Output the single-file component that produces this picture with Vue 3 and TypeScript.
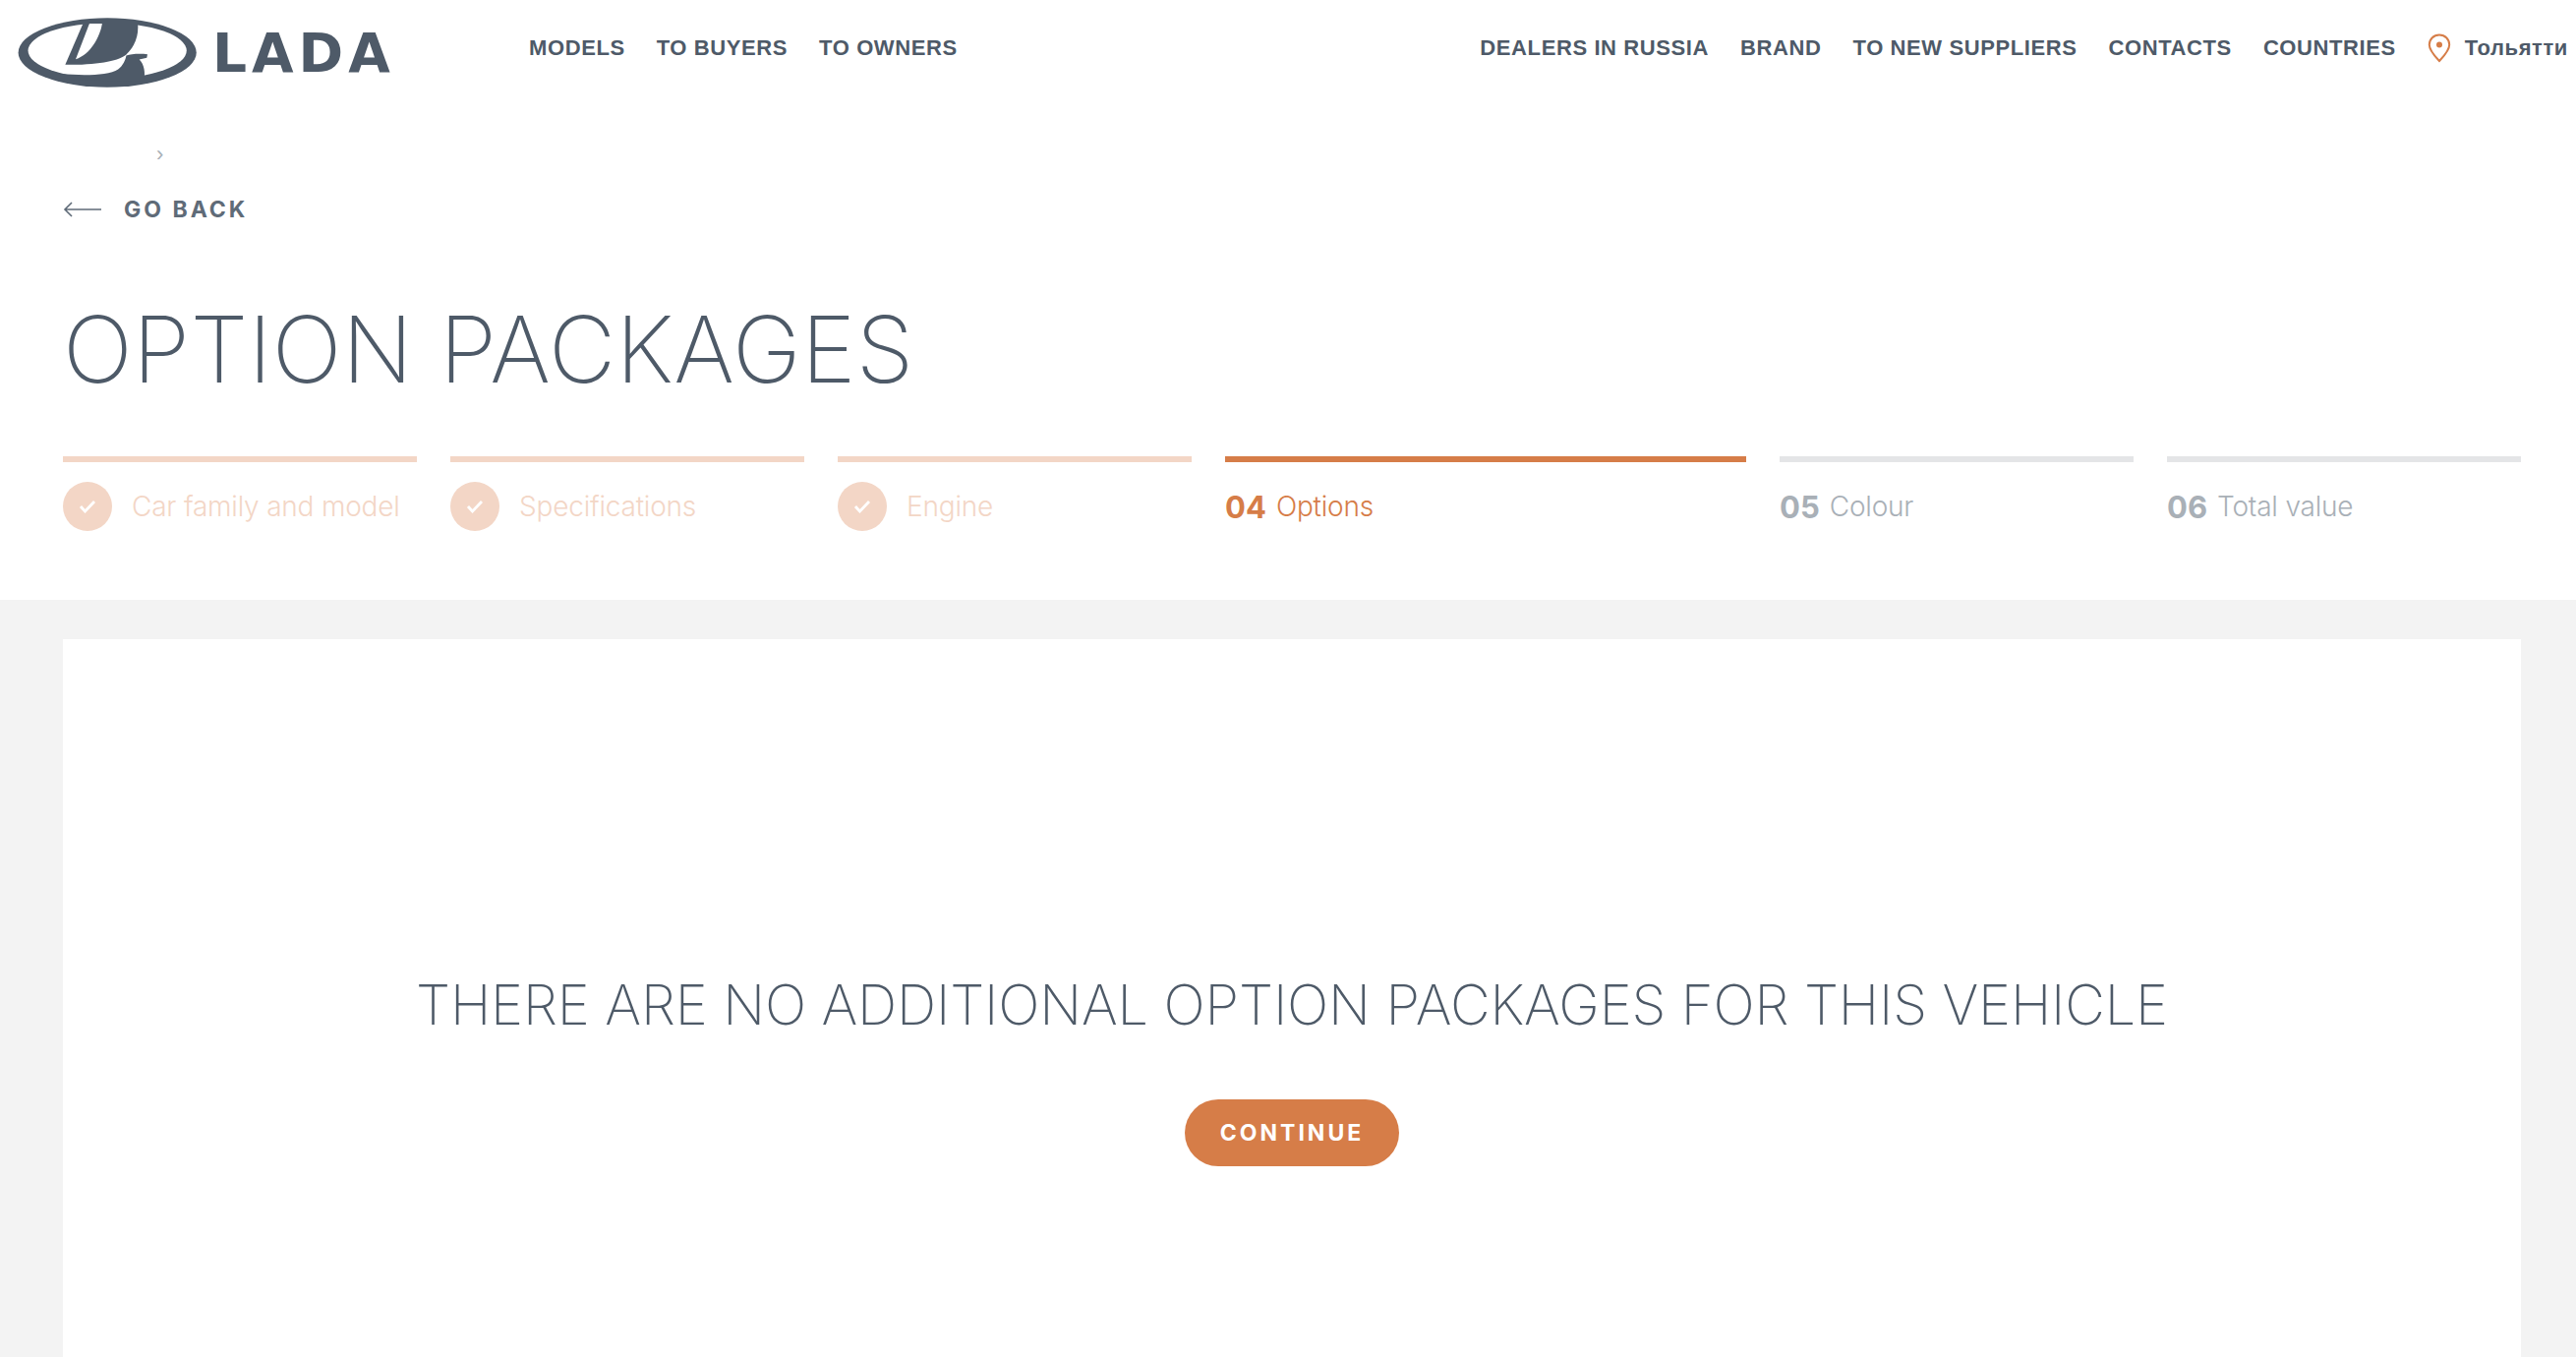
<template>
  <div class="page">
    <header class="header">
      <a class="logo">
        <svg class="logo-mark" viewBox="54 54 548 214" aria-hidden="true">
          <ellipse cx="327" cy="161" rx="273" ry="106" fill="#4e5a68" />
          <ellipse cx="327" cy="155" rx="243" ry="85" fill="#fff" />
          <path
            fill="#4e5a68"
            d="M255 66 L420 66 C425 112 410 142 385 167 C365 185 300 200 198 198 Z"
          />
          <path fill="#fff" d="M272 72 L311 72 C305 112 275 167 230 181 Z" />
          <path
            fill="#4e5a68"
            d="M185 226 C250 232 330 232 360 212 C375 202 383 182 385 170 C400 164 430 164 450 166 L448 177 L425 182 C440 197 445 222 438 250 L180 244 Z"
          />
        </svg>
        <span class="logo-text">LADA</span>
      </a>
      <nav class="nav nav-left">
        <a v-for="item in leftNav" :key="item">{{ item }}</a>
      </nav>
      <nav class="nav nav-right">
        <a v-for="item in rightNav" :key="item">{{ item }}</a>
        <a class="city">
          <svg width="24" height="30" viewBox="0 0 24 30" aria-hidden="true">
            <path
              d="M12 1.5C6 1.5 1.8 6 1.8 11.5c0 6 5.6 11.5 10.2 16.5 4.6-5 10.2-10.500 10.200-16.500C22.200 6 18 1.500 12 1.500Z"
              fill="none"
              stroke="#d67d48"
              stroke-width="2"
            />
            <circle cx="12" cy="11.500" r="3" fill="#d67d48" />
          </svg>
          <span>Тольятти</span>
        </a>
      </nav>
    </header>

    <section class="top">
      <div class="crumbs">›</div>
      <a class="back">
        <svg width="40" height="18" viewBox="0 0 40 18" aria-hidden="true">
          <path d="M39 9H2M9 2 2 9l7 7" fill="none" stroke="#5f6b78" stroke-width="1.600" />
        </svg>
        <span>GO BACK</span>
      </a>
      <h1 class="title">OPTION PACKAGES</h1>
      <ol class="steps">
        <li
          v-for="step in steps"
          :key="step.num"
          class="step"
          :class="step.state"
        >
          <div class="step-label">
            <span v-if="step.state === 'done'" class="check">
              <svg width="18" height="14" viewBox="0 0 18 14" aria-hidden="true">
                <path d="M2 7l4.500 5L16 2" fill="none" stroke="#fff" stroke-width="2.800" />
              </svg>
            </span>
            <b v-else class="num">{{ step.num }}</b>
            <span class="name">{{ step.name }}</span>
          </div>
        </li>
      </ol>
    </section>

    <main class="content">
      <div class="card">
        <h2 class="message">THERE ARE NO ADDITIONAL OPTION PACKAGES FOR THIS VEHICLE</h2>
        <button class="continue">CONTINUE</button>
      </div>
    </main>
  </div>
</template>

<script setup lang="ts">
interface Step {
  num: string
  name: string
  state: 'done' | 'active' | 'todo'
}

const leftNav = ['MODELS', 'TO BUYERS', 'TO OWNERS']
const rightNav = ['DEALERS IN RUSSIA', 'BRAND', 'TO NEW SUPPLIERS', 'CONTACTS', 'COUNTRIES']

const steps: Step[] = [
  { num: '01', name: 'Car family and model', state: 'done' },
  { num: '02', name: 'Specifications', state: 'done' },
  { num: '03', name: 'Engine', state: 'done' },
  { num: '04', name: 'Options', state: 'active' },
  { num: '05', name: 'Colour', state: 'todo' },
  { num: '06', name: 'Total value', state: 'todo' },
]
</script>

<style>
html,
body {
  margin: 0;
  background: #fff;
}
</style>

<style scoped>
.page {
  height: 1380px;
  overflow: hidden;
  display: flex;
  flex-direction: column;
  font-family: Inter, "Liberation Sans", sans-serif;
  color: #4e5a68;
}

.header {
  display: flex;
  align-items: flex-start;
  padding: 18px 8px 0 18px;
  height: 100px;
  box-sizing: border-box;
}

.logo {
  display: flex;
  align-items: flex-start;
  gap: 15px;
  width: 520px;
  flex: none;
}

.logo-mark {
  width: 183px;
  height: 71px;
}

.logo-text {
  font-family: "DejaVu Sans", sans-serif;
  font-weight: 700;
  font-size: 55px;
  line-height: 71px;
  letter-spacing: 5px;
  padding-top: 1px;
}

.nav {
  display: flex;
  align-items: center;
  gap: 32px;
  height: 62px;
  font-family: "Liberation Sans", sans-serif;
  font-weight: 700;
  font-size: 22px;
  letter-spacing: 0.6px;
}

.nav-right {
  margin-left: auto;
}

.city {
  display: flex;
  align-items: center;
  gap: 14px;
}

.top {
  padding: 0 56px 0 64px;
  height: 510px;
  box-sizing: border-box;
}

.crumbs {
  height: 30px;
  padding: 42px 0 0 95px;
  line-height: 30px;
  font-size: 22px;
  color: #a9b0b7;
  font-family: "Liberation Sans", sans-serif;
}

.back {
  display: flex;
  align-items: center;
  gap: 22px;
  margin-top: 26px;
  height: 30px;
  font-weight: 700;
  font-size: 23px;
  letter-spacing: 3px;
  color: #5f6b78;
}

.title {
  margin: 72px 0 0;
  font-weight: 200;
  font-size: 94px;
  line-height: 110px;
  letter-spacing: 0.3px;
}

.steps {
  list-style: none;
  display: flex;
  gap: 34px;
  margin: 54px 0 0;
  padding: 0;
}

.step {
  flex: 0 0 360px;
  border-top: 6px solid #e4e5e7;
  padding-top: 19px;
}

.step.done {
  border-color: #f3d6c6;
  color: #f3d6c6;
}

.step.active {
  flex: 1;
  border-color: #d67d48;
  color: #d67d48;
}

.step.todo {
  color: #a9b0b7;
}

.step-label {
  display: flex;
  align-items: center;
  gap: 10px;
  height: 52px;
  font-size: 28px;
  font-weight: 300;
  letter-spacing: -0.2px;
  white-space: nowrap;
}

.check {
  flex: none;
  width: 50px;
  height: 50px;
  margin-right: 10px;
  border-radius: 50%;
  background: #f3d6c6;
  display: flex;
  align-items: center;
  justify-content: center;
}

.num {
  font-size: 31px;
  font-weight: 700;
  letter-spacing: 0;
}

.content {
  flex: 1;
  background: #f3f3f3;
  padding: 40px 56px 0 64px;
}

.card {
  background: #fff;
  height: 100%;
  display: flex;
  flex-direction: column;
  align-items: center;
  padding-top: 330px;
  box-sizing: border-box;
}

.message {
  margin: 0;
  font-weight: 200;
  font-size: 56px;
  line-height: 84px;
  letter-spacing: -0.15px;
}

.continue {
  margin-top: 54px;
  width: 218px;
  height: 68px;
  border: none;
  border-radius: 34px;
  background: #d67d48;
  color: #fff;
  font-family: inherit;
  font-weight: 700;
  font-size: 23px;
  letter-spacing: 3px;
}
</style>
